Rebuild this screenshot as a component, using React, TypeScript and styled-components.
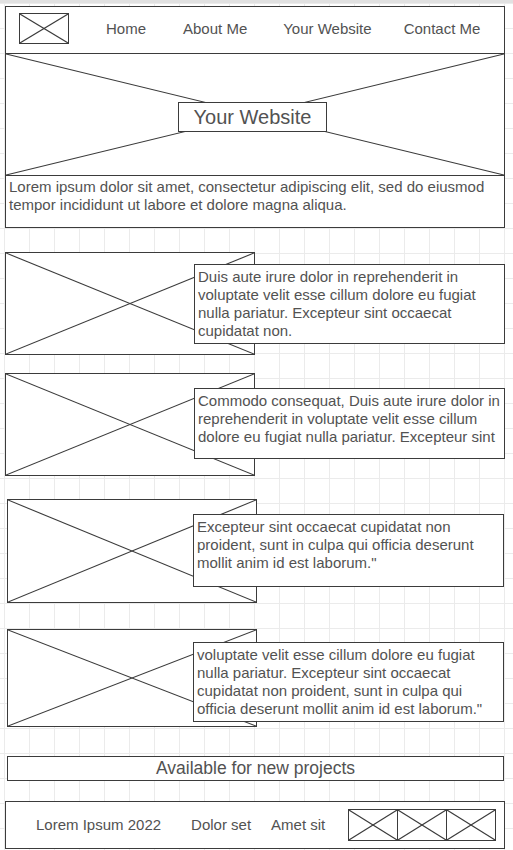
import React from "react";
import styled, { createGlobalStyle } from "styled-components";

const STROKE = "#3b3b3b";
const INK = "#525252";

const GlobalStyle = createGlobalStyle`
  html, body {
    margin: 0;
    padding: 0;
  }
  body {
    width: 513px;
    min-height: 850px;
    overflow: hidden;
    font-family: "Liberation Sans", Arial, sans-serif;
    color: ${INK};
    background-color: #ffffff;
    background-image:
      linear-gradient(to right, #ebebeb 1px, transparent 1px),
      linear-gradient(to bottom, #ebebeb 1px, transparent 1px);
    background-size: 25px 25px;
    background-position: 4px 3px;
  }
  * {
    box-sizing: border-box;
  }
`;

const Cross = () => (
  <CrossSvg viewBox="0 0 100 100" preserveAspectRatio="none">
    <line x1="0" y1="0" x2="100" y2="100" vectorEffect="non-scaling-stroke" />
    <line x1="0" y1="100" x2="100" y2="0" vectorEffect="non-scaling-stroke" />
  </CrossSvg>
);

const navItems = [
  { label: "Home", ml: 37 },
  { label: "About Me", ml: 37 },
  { label: "Your Website", ml: 36 },
  { label: "Contact Me", ml: 32 },
];

const cards = [
  {
    mt: 24,
    left: 5,
    split: 189,
    imgH: 103,
    textTop: 12,
    textH: 80,
    lines: [
      "Duis aute irure dolor in reprehenderit in",
      "voluptate velit esse cillum dolore eu fugiat",
      "nulla pariatur. Excepteur sint occaecat",
      "cupidatat non.",
    ],
  },
  {
    mt: 18,
    left: 5,
    split: 189,
    imgH: 103,
    textTop: 15,
    textH: 71,
    lines: [
      "Commodo consequat, Duis aute irure dolor in",
      "reprehenderit in voluptate velit esse cillum",
      "dolore eu fugiat nulla pariatur. Excepteur sint",
    ],
  },
  {
    mt: 23,
    left: 7,
    split: 186,
    imgH: 104,
    textTop: 15,
    textH: 73,
    lines: [
      "Excepteur sint occaecat cupidatat non",
      "proident, sunt in culpa qui officia deserunt",
      "mollit anim id est laborum.\"",
    ],
  },
  {
    mt: 26,
    left: 7,
    split: 186,
    imgH: 98,
    textTop: 13,
    textH: 80,
    lines: [
      "voluptate velit esse cillum dolore eu fugiat",
      "nulla pariatur. Excepteur sint occaecat",
      "cupidatat non proident, sunt in culpa qui",
      "officia deserunt mollit anim id est laborum.\"",
    ],
  },
];

const App = () => {
  return (
    <Main>
      <GlobalStyle />
      <TopStrip />
      <Frame>
        <Header>
          <Logo>
            <Cross />
          </Logo>
          {navItems.map((item) => (
            <NavLink key={item.label} $ml={item.ml}>
              {item.label}
            </NavLink>
          ))}
        </Header>
        <Hero>
          <Cross />
          <TitleBox>Your Website</TitleBox>
        </Hero>
        <Intro>
          Lorem ipsum dolor sit amet, consectetur adipiscing elit, sed do eiusmod
          <br />
          tempor incididunt ut labore et dolore magna aliqua.
        </Intro>
      </Frame>

      {cards.map((card, i) => (
        <Card key={i} $mt={card.mt} $left={card.left} $split={card.split}>
          <CardImage $h={card.imgH}>
            <Cross />
          </CardImage>
          <CardText $top={card.textTop} $h={card.textH}>
            {card.lines.map((line, j) => (
              <Line key={j}>{line}</Line>
            ))}
          </CardText>
        </Card>
      ))}

      <Banner>Available for new projects</Banner>

      <Footer>
        <FooterLink $ml={30}>Lorem Ipsum 2022</FooterLink>
        <FooterLink $ml={30}>Dolor set</FooterLink>
        <FooterLink $ml={20}>Amet sit</FooterLink>
        <IconStrip>
          {[0, 1, 2].map((i) => (
            <IconCell key={i}>
              <Cross />
            </IconCell>
          ))}
        </IconStrip>
      </Footer>
    </Main>
  );
};

export default App;

const Main = styled.div`
  width: 513px;
  height: 850px;
  display: flex;
  flex-direction: column;
`;

const TopStrip = styled.div`
  height: 3px;
  background: #e1e1e1;
`;

const CrossSvg = styled.svg`
  position: absolute;
  inset: 0;
  width: 100%;
  height: 100%;
  stroke: ${STROKE};
  stroke-width: 1.1;
  fill: none;
`;

const Frame = styled.div`
  margin: 3px 0 0 5px;
  width: 500px;
  border: 1px solid ${STROKE};
  background: #ffffff;
`;

const Header = styled.div`
  height: 46px;
  display: flex;
  align-items: flex-start;
  padding: 6px 0 0 13px;
`;

const Logo = styled.div`
  position: relative;
  width: 50px;
  height: 31px;
  border: 1px solid ${STROKE};
  flex-shrink: 0;
`;

const NavLink = styled.span<{ $ml: number }>`
  margin-left: ${(p) => p.$ml}px;
  font-size: 15px;
  line-height: 20px;
  margin-top: 6px;
  white-space: nowrap;
`;

const Hero = styled.div`
  position: relative;
  height: 123px;
  border-top: 1px solid ${STROKE};
  border-bottom: 1px solid ${STROKE};
  padding: 48px 0 0 172px;
`;

const TitleBox = styled.div`
  position: relative;
  width: 149px;
  height: 30px;
  border: 1px solid ${STROKE};
  background: #ffffff;
  font-size: 20px;
  line-height: 29px;
  text-align: center;
  white-space: nowrap;
`;

const Intro = styled.p`
  margin: 0;
  height: 51px;
  padding: 2px 3px;
  font-size: 15px;
  line-height: 18px;
  white-space: nowrap;
`;

const Card = styled.div<{ $mt: number; $left: number; $split: number }>`
  margin: ${(p) => p.$mt}px 0 0 ${(p) => p.$left}px;
  display: grid;
  grid-template-columns: ${(p) => `${p.$split}px ${250 - p.$split}px ${311 - (250 - p.$split)}px`};
  align-items: start;
`;

const CardImage = styled.div<{ $h: number }>`
  position: relative;
  grid-row: 1;
  grid-column: 1 / 3;
  height: ${(p) => p.$h}px;
  border: 1px solid ${STROKE};
  background: #ffffff;
`;

const CardText = styled.div<{ $top: number; $h: number }>`
  position: relative;
  grid-row: 1;
  grid-column: 2 / 4;
  margin-top: ${(p) => p.$top}px;
  height: ${(p) => p.$h}px;
  border: 1px solid ${STROKE};
  background: #ffffff;
  padding: 3px 3px;
  font-size: 15px;
  line-height: 18px;
`;

const Line = styled.div`
  white-space: nowrap;
`;

const Banner = styled.div`
  margin: 29px 0 0 7px;
  width: 497px;
  height: 25px;
  border: 1px solid ${STROKE};
  background: #ffffff;
  font-size: 17.5px;
  line-height: 23px;
  text-align: center;
  white-space: nowrap;
`;

const Footer = styled.div`
  margin: 20px 0 0 5px;
  width: 500px;
  height: 48px;
  border: 1px solid ${STROKE};
  background: #ffffff;
  display: flex;
  align-items: center;
`;

const FooterLink = styled.span<{ $ml: number }>`
  margin-left: ${(p) => p.$ml}px;
  font-size: 15px;
  line-height: 20px;
  white-space: nowrap;
`;

const IconStrip = styled.div`
  margin-left: 23px;
  display: flex;
`;

const IconCell = styled.div`
  position: relative;
  width: 50px;
  height: 32px;
  border: 1px solid ${STROKE};
  & + & {
    margin-left: -1px;
  }
`;
